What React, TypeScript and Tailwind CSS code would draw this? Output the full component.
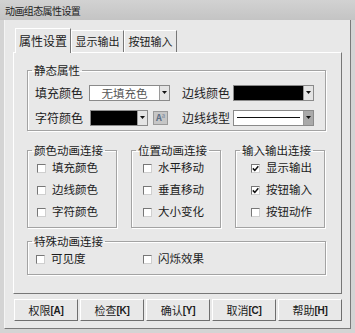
import type { ReactNode } from 'react'

const font = { fontFamily: '"Noto Sans CJK SC", "Liberation Sans", sans-serif' }

const Arrow = ({ dark = false }: { dark?: boolean }) => (
  <div
    className={`w-[10px] h-full flex items-center justify-center border-l border-[#9a9a9a] ${
      dark ? 'bg-[#a9a9a9]' : 'bg-[#e4e4e4]'
    }`}
  >
    <svg width="5" height="3" viewBox="0 0 5 3">
      <path d="M0 0h5L2.5 3z" fill="#111" />
    </svg>
  </div>
)

const Check = ({ checked = false }: { checked?: boolean }) => (
  <div className="w-[9px] h-[9px] bg-white border border-t-[#777] border-l-[#777] border-r-[#cfcfcf] border-b-[#cfcfcf] flex items-center justify-center">
    {checked && (
      <svg width="7" height="7" viewBox="0 0 7 7">
        <path d="M0.8 3.4 L2.8 5.4 L6.3 1.2" stroke="#111" strokeWidth="1.5" fill="none" />
      </svg>
    )}
  </div>
)

const Group = ({
  title,
  className,
  children,
}: {
  title: string
  className: string
  children: ReactNode
}) => (
  <fieldset
    className={`border border-[#a3a3a3] shadow-[inset_1px_1px_0_#fff,1px_1px_0_#fff] ${className}`}
  >
    <legend className="ml-[4px] px-[2px] whitespace-nowrap text-[11.5px] leading-[14px] text-[#1c1c1c]">
      {title}
    </legend>
    {children}
  </fieldset>
)

const CheckRow = ({ label, checked }: { label: string; checked?: boolean }) => (
  <div className="h-[22px] flex items-center gap-[6px] text-[11.5px] text-[#1c1c1c] whitespace-nowrap">
    <Check checked={checked} />
    <span>{label}</span>
  </div>
)

const buttons = ['权限', '检查', '确认', '取消', '帮助']
const keys = ['A', 'K', 'Y', 'C', 'H']

export default function App() {
  return (
    <div className="w-[355px] h-[333px] bg-[#d4d4d4] flex flex-col overflow-hidden" style={font}>
      {/* title bar */}
      <div className="h-[20px] shrink-0 bg-gradient-to-b from-[#d2d2d2] to-[#c4c4c4] flex items-center pl-[5px]">
        <span className="text-[10px] tracking-[-0.6px] text-[#222]">动画组态属性设置</span>
      </div>

      {/* window body */}
      <div className="h-[309px] mx-[4px] bg-[#e8e8e8] border-l border-l-[#f4f4f4] border-r border-r-[#7a7a7a] border-b border-b-[#7a7a7a] pt-[8px] px-[8px] flex flex-col">
        {/* tabs */}
        <div className="h-[24px] flex items-end pl-[2px]">
          <div className="w-[56px] h-[25px] -mb-px z-10 bg-[#e8e8e8] border border-b-0 border-l-[#fff] border-t-[#fff] border-r-[#777] flex items-center justify-center text-[12px] text-[#1c1c1c]">
            属性设置
          </div>
          <div className="w-[53px] h-[22px] border border-b-0 border-l-[#fff] border-t-[#fff] border-r-[#777] flex items-center justify-center text-[11px] text-[#1c1c1c]">
            显示输出
          </div>
          <div className="w-[53px] h-[22px] border border-b-0 border-l-[#fff] border-t-[#fff] border-r-[#777] flex items-center justify-center text-[11px] text-[#1c1c1c]">
            按钮输入
          </div>
        </div>

        {/* tab panel */}
        <div className="h-[242px] border border-t-[#fff] border-l-[#fff] border-r-[#777] border-b-[#777] px-[13px]">
          <Group title="静态属性" className="mt-[10px] w-[299px]">
            <div className="pt-[7px] pb-[4px] pl-[7px]">
              <div className="h-[17px] flex items-center text-[12px] text-[#1c1c1c]">
                <span className="w-[54px]">填充颜色</span>
                <div className="w-[81px] h-[16px] bg-white border border-[#8a8a8a] flex">
                  <span className="flex-1 text-center text-[11.5px] leading-[14px] text-[#555]">无填充色</span>
                  <Arrow />
                </div>
                <span className="ml-[12px] w-[51px]">边线颜色</span>
                <div className="w-[81px] h-[16px] bg-white border border-[#8a8a8a] flex">
                  <div className="flex-1 bg-black" />
                  <Arrow />
                </div>
              </div>
              <div className="h-[17px] mt-[8px] flex items-center text-[12px] text-[#1c1c1c]">
                <span className="w-[55px]">字符颜色</span>
                <div className="w-[58px] h-[16px] bg-white border border-[#8a8a8a] flex">
                  <div className="flex-1 bg-black" />
                  <Arrow />
                </div>
                <div className="ml-[5px] w-[15px] h-[14px] bg-[#c6c6c6] border border-[#9a9a9a] flex items-center justify-center">
                  <span className="text-[9px] leading-none text-[#5c6e84] font-bold">A</span>
                  <span className="text-[6px] leading-none text-[#7a8aa0] -mt-[4px]">a</span>
                </div>
                <span className="ml-[14px] w-[51px]">边线线型</span>
                <div className="w-[81px] h-[16px] bg-white border border-[#8a8a8a] flex">
                  <div className="flex-1 flex items-center px-[3px]">
                    <div className="w-full h-px bg-[#111]" />
                  </div>
                  <Arrow dark />
                </div>
              </div>
            </div>
          </Group>

          <div className="mt-[12px] flex gap-[14px]">
            <Group title="颜色动画连接" className="w-[90px]">
              <div className="pl-[9px] pb-[4px]">
                <CheckRow label="填充颜色" />
                <CheckRow label="边线颜色" />
                <CheckRow label="字符颜色" />
              </div>
            </Group>
            <Group title="位置动画连接" className="w-[90px]">
              <div className="pl-[11px] pb-[4px]">
                <CheckRow label="水平移动" />
                <CheckRow label="垂直移动" />
                <CheckRow label="大小变化" />
              </div>
            </Group>
            <Group title="输入输出连接" className="w-[90px]">
              <div className="pl-[15px] pb-[4px]">
                <CheckRow label="显示输出" checked />
                <CheckRow label="按钮输入" checked />
                <CheckRow label="按钮动作" />
              </div>
            </Group>
          </div>

          <Group title="特殊动画连接" className="mt-[6px] w-[299px]">
            <div className="pl-[8px] pb-[4px] flex">
              <div className="w-[107px]">
                <CheckRow label="可见度" />
              </div>
              <CheckRow label="闪烁效果" />
            </div>
          </Group>
        </div>

        {/* buttons */}
        <div className="mt-[5px] flex gap-[2px] pl-[1px]">
          {buttons.map((b, i) => (
            <div
              key={b}
              className="w-[64px] h-[22px] border border-t-[#fff] border-l-[#fff] border-r-[#6e6e6e] border-b-[#6e6e6e] bg-[#e8e8e8] flex items-center justify-center text-[11px] text-[#1c1c1c]"
            >
              {b}
              <span
                className="font-bold text-[10px] tracking-[-0.3px]"
                style={{ fontFamily: '"Liberation Sans", sans-serif' }}
              >
                [{keys[i]}]
              </span>
            </div>
          ))}
        </div>
      </div>
    </div>
  )
}
